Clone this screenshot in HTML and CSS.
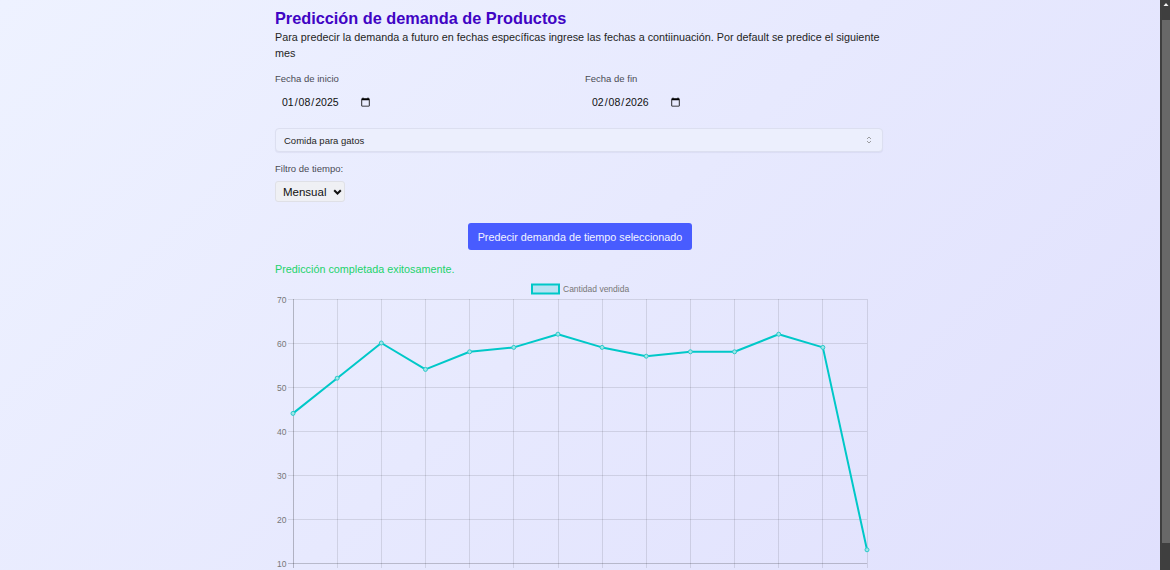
FILE: index.html
```html
<!DOCTYPE html>
<html lang="es">
<head>
<meta charset="utf-8">
<title>Predicción de demanda</title>
<link rel="stylesheet" href="styles.css">
</head>
<body>
<div class="app">
<div class="scroller">
<main class="page">
  <h1 class="title">Predicción de demanda de Productos</h1>
  <p class="intro">Para predecir la demanda a futuro en fechas específicas ingrese las fechas a contiinuación. Por default se predice el siguiente mes</p>

  <div class="dates">
    <div class="field">
      <label class="label" for="inicio">Fecha de inicio</label>
      <input class="date" id="inicio" type="date" value="2025-01-08">
    </div>
    <div class="field">
      <label class="label" for="fin">Fecha de fin</label>
      <input class="date" id="fin" type="date" value="2026-02-08">
    </div>
  </div>

  <div class="product-wrap">
    <select class="product">
      <option>Comida para gatos</option>
    </select>
    <svg class="product-icon" width="8" height="10" viewBox="0 0 8 10"><path d="M2 4 L4 2 L6 4 M2 6 L4 8 L6 6" fill="none" stroke="#888" stroke-width="0.8"/></svg>
  </div>

  <label class="label filter-label" for="filtro">Filtro de tiempo:</label>
  <div class="filter-wrap">
    <select class="filter" id="filtro">
      <option>Mensual</option>
    </select>
    <svg class="filter-icon" width="9" height="6" viewBox="0 0 9 6"><path d="M1.2 1.2 L4.5 4.5 L7.8 1.2" fill="none" stroke="#111" stroke-width="2"/></svg>
  </div>

  <div class="actions">
    <button class="predict" type="button">Predecir demanda de tiempo seleccionado</button>
  </div>

  <p class="success">Predicción completada exitosamente.</p>

  <svg class="chart" width="610" height="302" viewBox="0 0 610 302">
    <g class="legend">
      <rect x="257" y="4.5" width="27" height="9" fill="rgba(0,200,200,0.2)" stroke="#00c8c8" stroke-width="2"/>
      <text x="288" y="12" class="tick">Cantidad vendida</text>
    </g>
    <g stroke="rgba(0,0,0,0.1)" stroke-width="1">
      <line x1="13" y1="19.5" x2="592" y2="19.5"/>
      <line x1="13" y1="63.5" x2="592" y2="63.5"/>
      <line x1="13" y1="107.5" x2="592" y2="107.5"/>
      <line x1="13" y1="151.5" x2="592" y2="151.5"/>
      <line x1="13" y1="195.5" x2="592" y2="195.5"/>
      <line x1="13" y1="239.5" x2="592" y2="239.5"/>
      <line x1="18.5" y1="19" x2="18.5" y2="288"/>
      <line x1="62.5" y1="19" x2="62.5" y2="288"/>
      <line x1="106.5" y1="19" x2="106.5" y2="288"/>
      <line x1="150.5" y1="19" x2="150.5" y2="288"/>
      <line x1="194.5" y1="19" x2="194.5" y2="288"/>
      <line x1="238.5" y1="19" x2="238.5" y2="288"/>
      <line x1="283.5" y1="19" x2="283.5" y2="288"/>
      <line x1="327.5" y1="19" x2="327.5" y2="288"/>
      <line x1="371.5" y1="19" x2="371.5" y2="288"/>
      <line x1="415.5" y1="19" x2="415.5" y2="288"/>
      <line x1="459.5" y1="19" x2="459.5" y2="288"/>
      <line x1="503.5" y1="19" x2="503.5" y2="288"/>
      <line x1="547.5" y1="19" x2="547.5" y2="288"/>
      <line x1="592.5" y1="19" x2="592.5" y2="288"/>
    </g>
    <line x1="13" y1="283.5" x2="592" y2="283.5" stroke="rgba(0,0,0,0.2)"/>
    <line x1="18.5" y1="19" x2="18.5" y2="288" stroke="rgba(0,0,0,0.15)"/>
    <g class="tick" text-anchor="end">
      <text x="11.5" y="22.5">70</text>
      <text x="11.5" y="66.5">60</text>
      <text x="11.5" y="110.5">50</text>
      <text x="11.5" y="154.5">40</text>
      <text x="11.5" y="198.5">30</text>
      <text x="11.5" y="242.5">20</text>
      <text x="11.5" y="286.5">10</text>
    </g>
    <polyline fill="none" stroke="#00c8c8" stroke-width="2" stroke-linejoin="round"
      points="18,133.4 62.15,98.2 106.31,63 150.46,89.4 194.62,71.8 238.77,67.4 282.92,54.2 327.08,67.4 371.23,76.2 415.38,71.8 459.54,71.8 503.69,54.2 547.85,67.4 592,269.8"/>
    <g fill="#9fe6e8" stroke="#2ccaca" stroke-width="1">
      <circle cx="18" cy="133.4" r="2"/>
      <circle cx="62.15" cy="98.2" r="2"/>
      <circle cx="106.31" cy="63" r="2"/>
      <circle cx="150.46" cy="89.4" r="2"/>
      <circle cx="194.62" cy="71.8" r="2"/>
      <circle cx="238.77" cy="67.4" r="2"/>
      <circle cx="282.92" cy="54.2" r="2"/>
      <circle cx="327.08" cy="67.4" r="2"/>
      <circle cx="371.23" cy="76.2" r="2"/>
      <circle cx="415.38" cy="71.8" r="2"/>
      <circle cx="459.54" cy="71.8" r="2"/>
      <circle cx="503.69" cy="54.2" r="2"/>
      <circle cx="547.85" cy="67.4" r="2"/>
      <circle cx="592" cy="269.8" r="2"/>
    </g>
  </svg>
</main>
</div>
<div class="scrollbar" aria-hidden="true">
  <div class="scroll-up">
    <svg width="10" height="8" viewBox="0 0 10 8"><path d="M3.5 6 L6 3 L8.5 6 Z" fill="#f2f2f2"/></svg>
  </div>
  <div class="scroll-thumb"></div>
</div>
</div>
</body>
</html>
```

FILE: styles.css
```css
html {
  background: linear-gradient(135deg, #eef2ff 0%, #e0e0fd 100%);
  height: 100%;
}

body {
  margin: 0;
  height: 100%;
  font-family: "Liberation Sans", Arial, sans-serif;
  color: #1f1f24;
  background: transparent;
}

.app {
  display: flex;
  height: 100vh;
}

.scroller {
  flex: 1;
  min-width: 0;
  overflow-y: auto;
}

.scrollbar {
  width: 10px;
  flex: none;
  background: #3f3f3f;
  display: flex;
  flex-direction: column;
  align-items: flex-end;
}

.scroll-up {
  width: 10px;
  height: 20px;
}

.scroll-up svg {
  display: block;
}

.scroll-thumb {
  width: 8px;
  height: 523px;
  background: #686868;
}

.page {
  width: 610px;
  margin: 0 auto;
  padding-top: 7px;
  display: flex;
  flex-direction: column;
  align-items: flex-start;
}

.title {
  margin: 0;
  font-size: 16.3px;
  line-height: 22px;
  font-weight: bold;
  color: #4004c4;
}

.intro {
  margin: 0;
  font-size: 10.8px;
  line-height: 16px;
  color: #1f1f24;
}

.dates {
  margin-top: 11px;
  width: 100%;
  display: grid;
  grid-template-columns: 1fr 1fr;
  column-gap: 10px;
}

.field {
  display: flex;
  flex-direction: column;
  align-items: flex-start;
}

.label {
  font-size: 9.5px;
  line-height: 14px;
  color: #4a4b55;
}

.date {
  margin-top: 4px;
  height: 24px;
  box-sizing: border-box;
  padding: 0 6px;
  border: none;
  background: transparent;
  font-family: "Liberation Sans", Arial, sans-serif;
  font-size: 10.5px;
  color: #111;
}

.product-wrap {
  position: relative;
  margin-top: 14px;
  width: 608px;
}

.product {
  appearance: none;
  display: block;
  width: 100%;
  height: 24px;
  box-sizing: border-box;
  padding: 0 8px;
  border: 1px solid #dcdff0;
  border-radius: 4px;
  background: #eceffd;
  box-shadow: 0 1px 1px rgba(40, 40, 90, 0.06);
  font-family: "Liberation Sans", Arial, sans-serif;
  font-size: 9.5px;
  color: #1f1f24;
}

.product-icon {
  position: absolute;
  right: 10px;
  top: 7px;
}

.filter-label {
  margin-top: 10px;
}

.filter-wrap {
  position: relative;
  margin-top: 5px;
}

.filter {
  appearance: none;
  display: block;
  width: 70px;
  height: 21px;
  box-sizing: border-box;
  padding: 0 0 0 7px;
  border: 1px solid #dfe0e6;
  border-radius: 3px;
  background-color: #eff0f4;
  font-family: "Liberation Sans", Arial, sans-serif;
  font-size: 11.5px;
  color: #111;
}

.filter-icon {
  position: absolute;
  left: 58px;
  top: 8px;
}

.actions {
  margin-top: 21px;
  width: 100%;
  display: flex;
  justify-content: center;
}

.predict {
  height: 27px;
  padding: 0 10px;
  border: none;
  border-radius: 3px;
  background: #485cff;
  color: #f2f3ff;
  font-family: "Liberation Sans", Arial, sans-serif;
  font-size: 10.8px;
}

.success {
  margin: 12px 0 0;
  font-size: 10.8px;
  line-height: 14px;
  color: #22d36b;
}

.chart {
  display: block;
  margin-top: 4px;
}

.tick {
  font-family: "Liberation Sans", Arial, sans-serif;
  font-size: 8.5px;
  fill: #777;
}
```
